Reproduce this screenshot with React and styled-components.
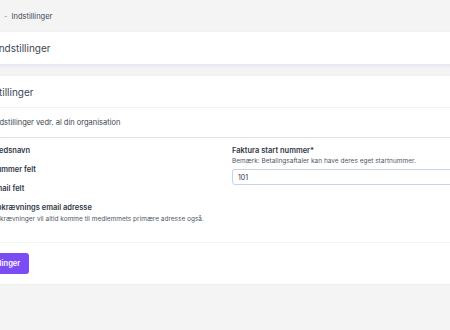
import React from 'react';
import styled, {createGlobalStyle} from 'styled-components';

const GlobalStyle = createGlobalStyle`
  html, body {
    margin: 0;
    padding: 0;
    background: #f4f4f5;
  }
  body {
    font-family: Inter, "Noto Sans", sans-serif;
    color: #3b4453;
    overflow: hidden;
  }
`;

const Page = styled.div`
  margin-left: -50px;
  width: 530px;
  display: flex;
  flex-direction: column;
`;

const Breadcrumb = styled.nav`
  height: 32px;
  display: flex;
  align-items: center;
  gap: 4px;
  padding-left: 41px;
  font-size: 7.5px;
  color: #4a5263;
`;

const Crumb = styled.span`
  color: ${p => (p.$muted ? '#8a92a0' : '#3e4757')};
`;

const Card = styled.section`
  background: #fff;
  box-shadow: 0 1px 3px rgba(60, 60, 110, 0.08);
  border-bottom: 1px solid ${p => (p.$accent ? '#e6e6f6' : '#eeeef2')};
  margin-bottom: ${p => p.$gap || 0}px;
`;

const CardHeader = styled.div`
  height: ${p => p.$h || 31}px;
  display: flex;
  align-items: center;
  padding-left: ${p => p.$pad}px;
  border-bottom: ${p => (p.$line ? `1px solid ${p.$line}` : 'none')};
  font-size: ${p => p.$size || 10}px;
  color: ${p => p.$color || '#3e4756'};
`;

const FormGrid = styled.div`
  display: grid;
  grid-template-columns: 1fr 1fr;
  column-gap: 16px;
  padding: 3px 23px 18px 41px;
  border-bottom: 1px solid #f3f3f6;
`;

const Column = styled.div`
  display: flex;
  flex-direction: column;
`;

const Field = styled.div`
  display: flex;
  flex-direction: column;
`;

const Label = styled.div`
  font-size: 7.5px;
  font-weight: 600;
  color: #2f3745;
  line-height: 11px;
  padding: 4px 0 ${p => (p.$tight !== undefined ? p.$tight : 4)}px;
`;

const Help = styled.div`
  font-size: 6.5px;
  color: #4f5767;
  line-height: 9px;
`;

const Input = styled.input`
  margin-top: 3px;
  height: 16px;
  box-sizing: border-box;
  border: 1px solid #c7d3e6;
  border-radius: 3px;
  padding: 0 5px;
  font-family: inherit;
  font-size: 7px;
  color: #2f3745;
  background: #fff;
  outline: none;
`;

const Footer = styled.div`
  padding: 10px 0 10px 1px;
`;

const Button = styled.button`
  display: block;
  height: 21px;
  padding: 0 9px 0 8px;
  border: none;
  border-radius: 3px;
  background: #7b4cf4;
  color: #fff;
  font-family: inherit;
  font-size: 7.5px;
  font-weight: 600;
  cursor: pointer;
`;

const HomeIcon = () => (
  <svg width="9" height="9" viewBox="0 0 24 24" fill="none" stroke="#9aa1ad" strokeWidth="2">
    <path d="M3 11l9-7 9 7v9H3z"/>
  </svg>
);

const App = () => {
  return (
    <>
      <GlobalStyle/>
      <Page>
        <Breadcrumb>
          <HomeIcon/>
          <Crumb $muted>-</Crumb>
          <Crumb>Indstillinger</Crumb>
        </Breadcrumb>

        <Card $accent $gap={11}>
          <CardHeader $h={32} $pad={46} $size={10}>Indstillinger</CardHeader>
        </Card>

        <Card>
          <CardHeader $pad={29} $size={10} $line="#f2f2f6">Indstillinger</CardHeader>
          <CardHeader $h={29} $pad={43} $size={7.5} $line="#e2e2e6" $color="#3b4453">
            Indstillinger vedr. al din organisation
          </CardHeader>
          <FormGrid>
            <Column>
              <Field><Label>Kredsnavn</Label></Field>
              <Field><Label>Nummer felt</Label></Field>
              <Field><Label>Email felt</Label></Field>
              <Field>
                <Label $tight={2}>Opkrævnings email adresse</Label>
                <Help>Opkrævninger vil altid komme til medlemmets primære adresse også.</Help>
              </Field>
            </Column>
            <Column>
              <Field>
                <Label $tight={1}>Faktura start nummer*</Label>
                <Help>Bemærk: Betalingsaftaler kan have deres eget startnummer.</Help>
                <Input defaultValue="101"/>
              </Field>
            </Column>
          </FormGrid>
          <Footer>
            <Button>Gem indstillinger</Button>
          </Footer>
        </Card>
      </Page>
    </>
  );
};

export default App;
